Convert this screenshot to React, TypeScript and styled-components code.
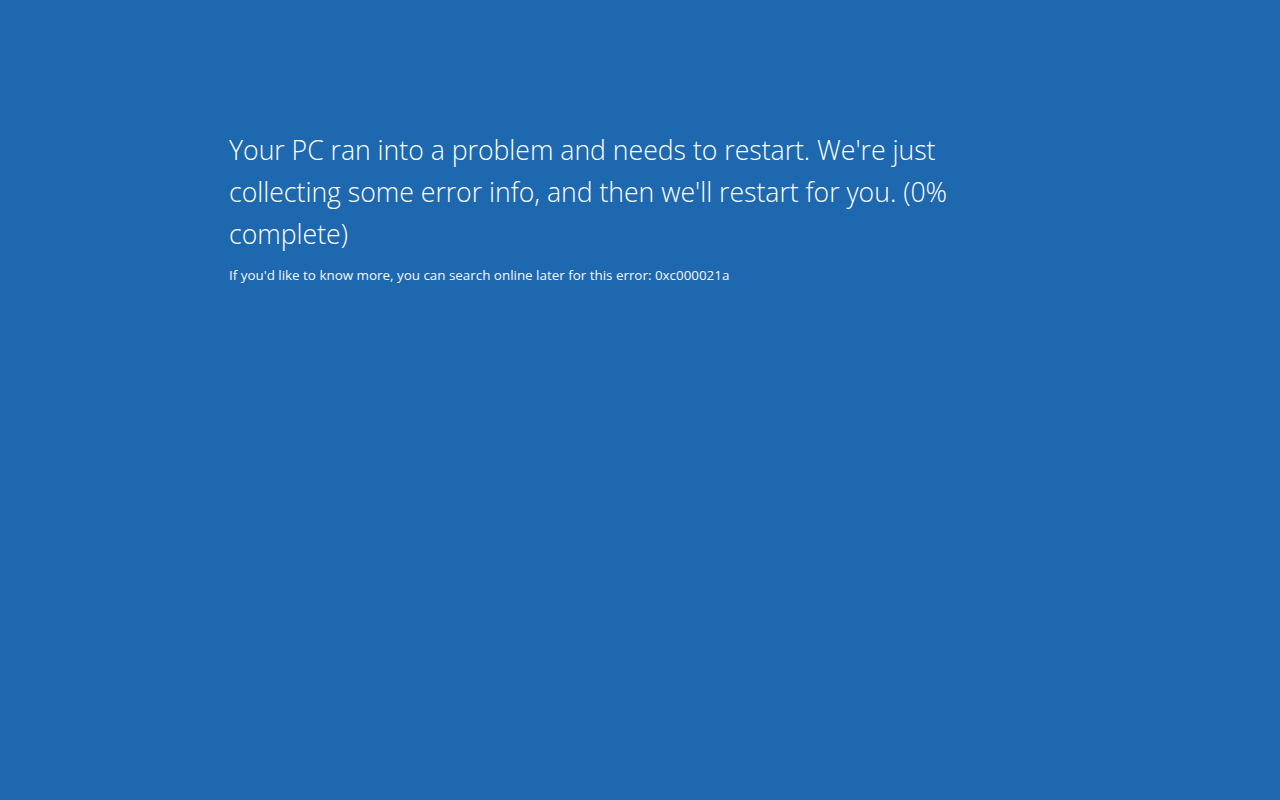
import React from "react";
import styled, { createGlobalStyle } from "styled-components";

const Global = createGlobalStyle`
  html, body { margin: 0; padding: 0; background: #1e68b0; }
  body { font-family: "Open Sans", "Noto Sans", sans-serif; }
`;

const Screen = styled.div`
  width: 1280px;
  height: 800px;
  background: #1e68b0;
  color: #ffffff;
  box-sizing: border-box;
  padding: 129px 0 0 229px;
  display: flex;
  flex-direction: column;
`;

const Headline = styled.p`
  margin: 0;
  max-width: 740px;
  font-size: 26.6px;
  font-weight: 300;
  line-height: 42px;
`;

const Detail = styled.p`
  margin: 10px 0 0;
  font-size: 13.4px;
  font-weight: 400;
  line-height: 20px;
  color: #f4f7fb;
`;

export default function App() {
  return (
    <>
      <Global />
      <Screen>
        <Headline>
          Your PC ran into a problem and needs to restart. We're just collecting
          some error info, and then we'll restart for you. (0% complete)
        </Headline>
        <Detail>
          If you'd like to know more, you can search online later for this error: 0xc000021a
        </Detail>
      </Screen>
    </>
  );
}
